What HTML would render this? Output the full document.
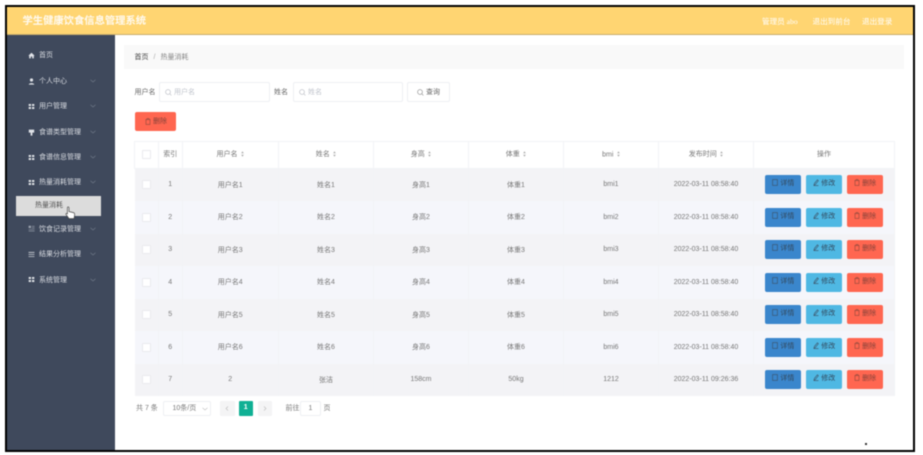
<!DOCTYPE html>
<html lang="zh"><head><meta charset="utf-8"><title>学生健康饮食信息管理系统</title>
<style>
html,body{margin:0;padding:0;background:#fff;width:923px;height:455px;overflow:hidden}
#w{position:absolute;left:0;top:0;width:923px;height:455px;overflow:hidden;filter:blur(.6px);font-family:"Liberation Sans","Noto Sans CJK SC",sans-serif;font-size:7px;color:#777;background:#fff}
.a{position:absolute;white-space:nowrap;line-height:1}
.m{position:absolute;left:39px;color:#d8dbe1;font-size:7px;line-height:10px;white-space:nowrap;margin-top:.6px}
.ic{position:absolute;left:27.5px;width:7px;height:7px;fill:#e0e3e8;margin-top:.4px}
.ar{position:absolute;left:90px;width:6px;height:4px;fill:none;stroke:#77808f;stroke-width:.6}
table{position:absolute;left:134px;top:141px;width:761px;border-collapse:collapse;table-layout:fixed}
th,td{padding:0;text-align:center;font-weight:400;font-size:7px;border:0;border-right:1px solid #f2f3f6;color:#777;white-space:nowrap}
th{height:24.5px;background:#fff;border-top:1px solid #f2f3f6;border-bottom:1px solid #f2f3f6;padding-bottom:1px}
td{height:32.5px}
tr.o td{background:#f3f3f6}
tr.e td{background:#f5f6fb}
th:first-child{border-left:1px solid #f2f3f6}
.s{width:3px;height:6px;margin-left:3.5px;vertical-align:-.5px;fill:#aaa}
.c{display:inline-block;width:7px;height:7px;background:#fff;border:1px solid #eaeaee;border-radius:1px;vertical-align:middle}
.b{display:inline-block;width:36.7px;height:18.6px;line-height:18.6px;border-radius:2px;font-size:7px;color:#33495e;margin-left:4.2px;vertical-align:middle}
.b:first-child{margin-left:0}
.b svg{width:6px;height:7px;vertical-align:-1px;margin-right:2.5px;fill:none;stroke:#3d5064;stroke-width:.6}
.b1{background:#3a86cc}.b2{background:#4fb8e3}.b3{background:#ff6650;color:#85433a}
.b3 svg{stroke:#8f4a3e}
.in{position:absolute;background:#fff;border:1px solid #eef0f3;border-radius:2px;box-sizing:border-box}
</style></head><body>
<div id="w">
<svg width="0" height="0" style="position:absolute"><defs>
<symbol id="g" viewBox="0 0 7 7"><rect x=".7" y="1" width="2.3" height="2"/><rect x="4" y="1" width="2.3" height="2"/><rect x=".7" y="4" width="2.3" height="2"/><rect x="4" y="4" width="2.3" height="2"/></symbol>
<symbol id="doc" viewBox="0 0 6 7"><rect x=".6" y=".6" width="4.8" height="5.8"/></symbol>
<symbol id="ed" viewBox="0 0 6 7"><path d="M1 6.2L1.4 4.4 4.4.8 5.4 1.7 2.4 5.4ZM.5 6.6H5.5"/></symbol>
<symbol id="tr" viewBox="0 0 6 7"><path d="M.5 1.6H5.5M2 1.5V.6H4V1.5M1 1.7V6.4H5V1.7"/></symbol>
<symbol id="so" viewBox="0 0 3 6"><path d="M1.5.3L2.8 2.2H.2ZM1.5 5.7L2.8 3.8H.2Z"/></symbol>
</defs></svg>

<!-- frame -->
<div class="a" style="left:5px;top:5px;width:910px;height:447px;background:#000"></div>
<div class="a" style="left:7px;top:7px;width:905.5px;height:442.5px;background:#fff"></div>
<!-- header -->
<div class="a" style="left:7px;top:7px;width:905.5px;height:28px;background:#ffd572;border-bottom:.6px solid #c9ad6b;box-sizing:border-box"></div>
<div class="a" style="left:22.5px;top:16.6px;color:#fff;font-size:10.3px;font-weight:700;opacity:.9">学生健康饮食信息管理系统</div>
<div class="a" style="left:762px;top:17.5px;color:#fff;font-size:7.6px;font-family:'Liberation Serif','Noto Sans CJK SC',serif">管理员 abo</div>
<div class="a" style="left:812.5px;top:17.5px;color:#fff;font-size:7.6px">退出到前台</div>
<div class="a" style="left:862px;top:17.5px;color:#fff;font-size:7.6px">退出登录</div>

<!-- sidebar -->
<div class="a" style="left:7px;top:35px;width:108px;height:414.5px;background:#3f495c"></div>
<svg class="ic" style="top:51.5px" viewBox="0 0 7 7"><path d="M3.5.8L.3 3.8H1.2V6.4H2.8V4.5H4.2V6.4H5.8V3.8H6.7Z"/></svg><div class="m" style="top:50px">首页</div>
<svg class="ic" style="top:77.5px" viewBox="0 0 7 7"><circle cx="3.5" cy="2" r="1.6"/><path d="M.8 6.6C.8 4.6 6.2 4.6 6.2 6.6Z"/></svg><div class="m" style="top:76px">个人中心</div><svg class="ar" style="top:78.5px" viewBox="0 0 6 4"><path d="M.5.8L3 3 5.5.8"/></svg>
<svg class="ic" style="top:102.5px"><use href="#g"/></svg><div class="m" style="top:101px">用户管理</div><svg class="ar" style="top:104px" viewBox="0 0 6 4"><path d="M.5.8L3 3 5.5.8"/></svg>
<svg class="ic" style="top:128.5px" viewBox="0 0 7 7"><path d="M.8.6H6.2V3.6H4.4V6.6H2.6V3.6H.8Z"/></svg><div class="m" style="top:127px">食谱类型管理</div><svg class="ar" style="top:130px" viewBox="0 0 6 4"><path d="M.5.8L3 3 5.5.8"/></svg>
<svg class="ic" style="top:153.5px"><use href="#g"/></svg><div class="m" style="top:152px">食谱信息管理</div><svg class="ar" style="top:155px" viewBox="0 0 6 4"><path d="M.5.8L3 3 5.5.8"/></svg>
<svg class="ic" style="top:178.5px"><use href="#g"/></svg><div class="m" style="top:177.5px">热量消耗管理</div><svg class="ar" style="top:180px" viewBox="0 0 6 4"><path d="M.5.8L3 3 5.5.8"/></svg>
<div class="a" style="left:16px;top:195.5px;width:85px;height:20px;background:#dcdcdc"></div>
<div class="a" style="left:35px;top:202px;color:#555;font-size:7px">热量消耗</div>
<svg class="ic" style="top:225px;fill:#9aa1ad" viewBox="0 0 7 7"><path d="M.6.8H3V3H.6ZM3.8 1H6.6V1.6H3.8ZM3.8 2.6H6.6V3.2H3.8ZM.6 4.2H6.6V4.8H.6ZM.6 5.8H6.6V6.4H.6Z"/></svg><div class="m" style="top:224px">饮食记录管理</div><svg class="ar" style="top:226.5px" viewBox="0 0 6 4"><path d="M.5.8L3 3 5.5.8"/></svg>
<svg class="ic" style="top:250.5px" viewBox="0 0 7 7"><path d="M.5 1H6.5V1.7H.5ZM.5 3.1H6.5V3.8H.5ZM.5 5.2H6.5V5.9H.5Z"/></svg><div class="m" style="top:249.5px">结果分析管理</div><svg class="ar" style="top:252px" viewBox="0 0 6 4"><path d="M.5.8L3 3 5.5.8"/></svg>
<svg class="ic" style="top:276px"><use href="#g"/></svg><div class="m" style="top:275px">系统管理</div><svg class="ar" style="top:277.5px" viewBox="0 0 6 4"><path d="M.5.8L3 3 5.5.8"/></svg>
<!-- cursor -->
<svg class="a" style="left:65px;top:206px" width="11" height="14" viewBox="0 0 11 14"><path d="M2.6 1.2C3.4.6 4 1 4 2V5.6L8.4 6.6C9.6 7 9.8 8 9.6 9.4L9 12.6H4L1 8.4C.6 7.4 1.6 7 2.4 7.8V2Z" fill="#fff" stroke="#444" stroke-width=".7"/></svg>

<!-- breadcrumb -->
<div class="a" style="left:124px;top:45px;width:780px;height:24px;background:#f9f9f9"></div>
<div class="a" style="left:134.5px;top:53.5px;color:#444;font-size:7px">首页<span style="color:#aaa;margin:0 5px">/</span><span style="color:#888">热量消耗</span></div>

<!-- search -->
<div class="a" style="left:134.5px;top:88.5px;color:#666;font-size:7px">用户名</div>
<div class="in" style="left:159px;top:82px;width:110.5px;height:19.5px"></div>
<svg class="a" style="left:164.5px;top:88.5px" width="7" height="7" viewBox="0 0 7 7" fill="none" stroke="#b5b8c0" stroke-width=".6"><circle cx="3" cy="3" r="2.4"/><path d="M4.8 4.8L6.4 6.4"/></svg>
<div class="a" style="left:174px;top:88.5px;color:#c0c4cc">用户名</div>
<div class="a" style="left:274px;top:88.5px;color:#666;font-size:7px">姓名</div>
<div class="in" style="left:293px;top:82px;width:110px;height:19.5px"></div>
<svg class="a" style="left:298.5px;top:88.5px" width="7" height="7" viewBox="0 0 7 7" fill="none" stroke="#b5b8c0" stroke-width=".6"><circle cx="3" cy="3" r="2.4"/><path d="M4.8 4.8L6.4 6.4"/></svg>
<div class="a" style="left:308px;top:88.5px;color:#c0c4cc">姓名</div>
<div class="in" style="left:407px;top:82px;width:42.5px;height:19.5px"></div>
<svg class="a" style="left:417px;top:88.5px" width="7" height="7" viewBox="0 0 7 7" fill="none" stroke="#888" stroke-width=".6"><circle cx="3" cy="3" r="2.4"/><path d="M4.8 4.8L6.4 6.4"/></svg>
<div class="a" style="left:426px;top:88.5px;color:#666">查询</div>
<div class="a" style="left:134.5px;top:112px;width:41.5px;height:18.5px;background:#ff6650;border-radius:2px"></div>
<svg class="a" style="left:145px;top:118px;fill:none;stroke:#8f4a3e;stroke-width:.6" width="6" height="7"><use href="#tr"/></svg>
<div class="a" style="left:153px;top:118px;color:#85433a">删除</div>

<!-- table -->
<table><colgroup><col style="width:24px"><col style="width:23.5px"><col style="width:96.5px"><col style="width:95px"><col style="width:95px"><col style="width:95px"><col style="width:95px"><col style="width:95px"><col></colgroup>
<thead><tr><th><span class="c"></span></th><th>索引</th><th>用户名<svg class="s"><use href="#so"/></svg></th><th>姓名<svg class="s"><use href="#so"/></svg></th><th>身高<svg class="s"><use href="#so"/></svg></th><th>体重<svg class="s"><use href="#so"/></svg></th><th>bmi<svg class="s"><use href="#so"/></svg></th><th>发布时间<svg class="s"><use href="#so"/></svg></th><th>操作</th></tr></thead>
<tbody>
<tr class="o"><td><span class="c"></span></td><td>1</td><td>用户名1</td><td>姓名1</td><td>身高1</td><td>体重1</td><td>bmi1</td><td>2022-03-11 08:58:40</td><td><span class="b b1"><svg><use href="#doc"/></svg>详情</span><span class="b b2"><svg><use href="#ed"/></svg>修改</span><span class="b b3"><svg><use href="#tr"/></svg>删除</span></td></tr>
<tr class="e"><td><span class="c"></span></td><td>2</td><td>用户名2</td><td>姓名2</td><td>身高2</td><td>体重2</td><td>bmi2</td><td>2022-03-11 08:58:40</td><td><span class="b b1"><svg><use href="#doc"/></svg>详情</span><span class="b b2"><svg><use href="#ed"/></svg>修改</span><span class="b b3"><svg><use href="#tr"/></svg>删除</span></td></tr>
<tr class="o"><td><span class="c"></span></td><td>3</td><td>用户名3</td><td>姓名3</td><td>身高3</td><td>体重3</td><td>bmi3</td><td>2022-03-11 08:58:40</td><td><span class="b b1"><svg><use href="#doc"/></svg>详情</span><span class="b b2"><svg><use href="#ed"/></svg>修改</span><span class="b b3"><svg><use href="#tr"/></svg>删除</span></td></tr>
<tr class="e"><td><span class="c"></span></td><td>4</td><td>用户名4</td><td>姓名4</td><td>身高4</td><td>体重4</td><td>bmi4</td><td>2022-03-11 08:58:40</td><td><span class="b b1"><svg><use href="#doc"/></svg>详情</span><span class="b b2"><svg><use href="#ed"/></svg>修改</span><span class="b b3"><svg><use href="#tr"/></svg>删除</span></td></tr>
<tr class="o"><td><span class="c"></span></td><td>5</td><td>用户名5</td><td>姓名5</td><td>身高5</td><td>体重5</td><td>bmi5</td><td>2022-03-11 08:58:40</td><td><span class="b b1"><svg><use href="#doc"/></svg>详情</span><span class="b b2"><svg><use href="#ed"/></svg>修改</span><span class="b b3"><svg><use href="#tr"/></svg>删除</span></td></tr>
<tr class="e"><td><span class="c"></span></td><td>6</td><td>用户名6</td><td>姓名6</td><td>身高6</td><td>体重6</td><td>bmi6</td><td>2022-03-11 08:58:40</td><td><span class="b b1"><svg><use href="#doc"/></svg>详情</span><span class="b b2"><svg><use href="#ed"/></svg>修改</span><span class="b b3"><svg><use href="#tr"/></svg>删除</span></td></tr>
<tr class="o"><td><span class="c"></span></td><td>7</td><td>2</td><td>张洁</td><td>158cm</td><td>50kg</td><td>1212</td><td>2022-03-11 09:26:36</td><td><span class="b b1"><svg><use href="#doc"/></svg>详情</span><span class="b b2"><svg><use href="#ed"/></svg>修改</span><span class="b b3"><svg><use href="#tr"/></svg>删除</span></td></tr>
</tbody></table>

<!-- pagination -->
<div class="a" style="left:136px;top:404.5px">共 7 条</div>
<div class="in" style="left:163px;top:401px;width:47.5px;height:14.5px"></div>
<div class="a" style="left:172.5px;top:404.5px">10条/页</div>
<svg class="a" style="left:201.5px;top:407px" width="6" height="4" viewBox="0 0 6 4" fill="none" stroke="#bbb" stroke-width=".6"><path d="M.5.8L3 3 5.5.8"/></svg>
<div class="a" style="left:220px;top:401px;width:14.5px;height:14.5px;background:#f4f4f5;border-radius:1px"></div>
<svg class="a" style="left:225px;top:406px" width="4" height="5" viewBox="0 0 4 5" fill="none" stroke="#bbb" stroke-width=".6"><path d="M3 .5L1 2.5 3 4.5"/></svg>
<div class="a" style="left:238.5px;top:401px;width:14.5px;height:14.5px;line-height:14.5px;text-align:center;background:#0fb094;border-radius:1px;color:#fff;font-weight:700">1</div>
<div class="a" style="left:257.5px;top:401px;width:14.5px;height:14.5px;background:#f4f4f5;border-radius:1px"></div>
<svg class="a" style="left:263px;top:406px" width="4" height="5" viewBox="0 0 4 5" fill="none" stroke="#bbb" stroke-width=".6"><path d="M1 .5L3 2.5 1 4.5"/></svg>
<div class="a" style="left:285.5px;top:404.5px">前往</div>
<div class="in" style="left:299.5px;top:401px;width:21.5px;height:14.5px"></div>
<div class="a" style="left:308.5px;top:404.5px">1</div>
<div class="a" style="left:323.5px;top:404.5px">页</div>
<div class="a" style="left:864.5px;top:442.5px;width:2px;height:2px;background:#333"></div>
</div>
</body></html>
